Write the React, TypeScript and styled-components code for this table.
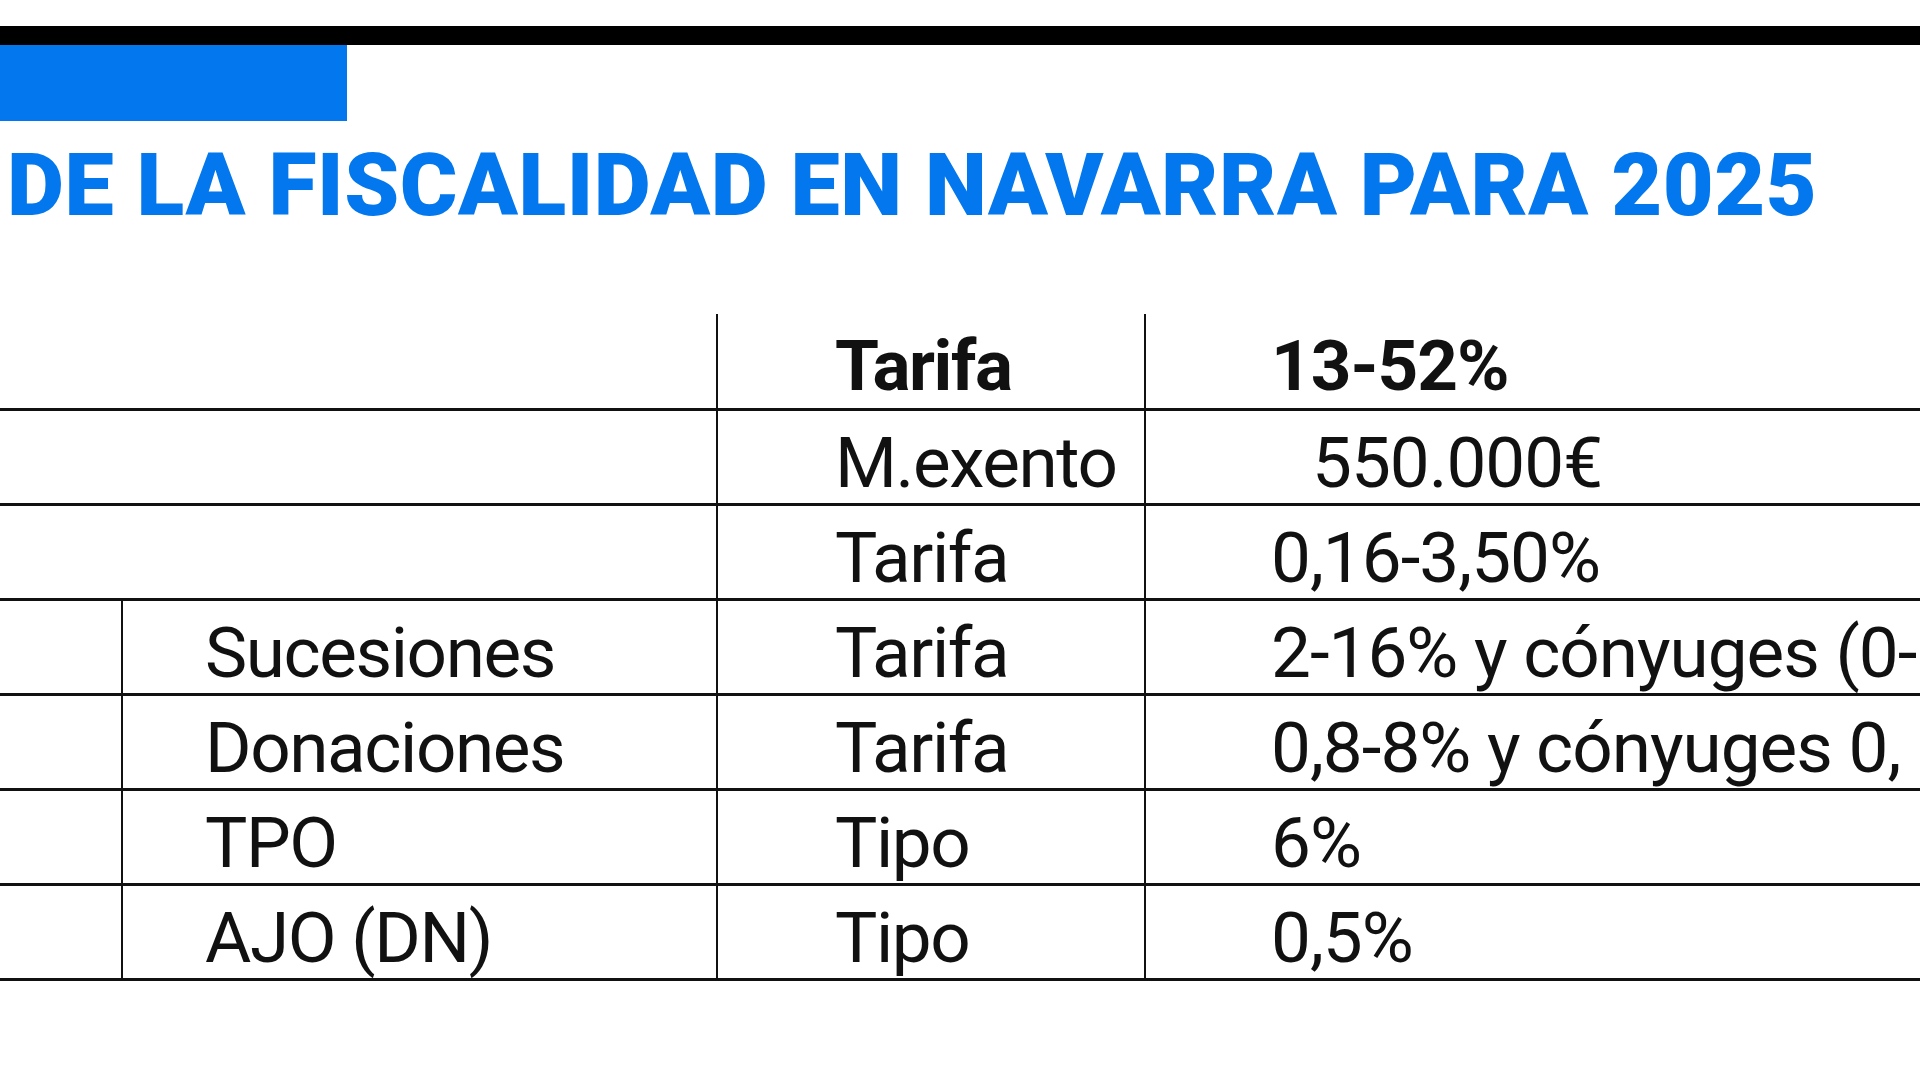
import React from "react";
import styled, { createGlobalStyle } from "styled-components";

const GlobalStyle = createGlobalStyle`
  html, body {
    margin: 0;
    padding: 0;
    background: #ffffff;
    overflow: hidden;
  }
  body {
    font-family: Roboto, "Liberation Sans", Arial, sans-serif;
    color: #111111;
  }
`;

const Page = styled.div`
  width: 1920px;
  height: 1080px;
  overflow: hidden;
  display: flex;
  flex-direction: column;
`;

const TopRule = styled.div`
  margin-top: 26px;
  height: 19px;
  background: #000000;
`;

const Tab = styled.div`
  width: 347px;
  height: 76px;
  background: #0377ee;
`;

const Title = styled.h1`
  margin: 20px 0 0 0;
  padding-left: 7px;
  font-family: Roboto, "Liberation Sans", sans-serif;
  font-weight: 900;
  font-size: 88px;
  line-height: 88px;
  letter-spacing: 0.5px;
  color: #0377ee;
  white-space: nowrap;
`;

const Table = styled.div`
  margin-top: 87px;
  display: flex;
  flex-direction: column;
`;

const Row = styled.div`
  display: grid;
  grid-template-columns: 121px 595px 428px minmax(0, 1fr);
  height: 95px;
  box-sizing: border-box;
  border-bottom: 3px solid #111111;
  &:first-child {
    margin-top: -2px;
    height: 97px;
  }
`;

const Cell = styled.div<{ $span?: number; $line?: boolean; $pad?: number; $bold?: boolean; $tight?: number }>`
  grid-column: span ${(p) => p.$span ?? 1};
  box-sizing: border-box;
  overflow: hidden;
  border-left: ${(p) => (p.$line ? "2px solid #111111" : "none")};
  padding-left: ${(p) => p.$pad ?? 0}px;
  padding-top: 10px;
  font-family: Roboto, "Liberation Sans", sans-serif;
  font-size: 71px;
  line-height: 83px;
  letter-spacing: ${(p) => p.$tight ?? -1.4}px;
  font-weight: ${(p) => (p.$bold ? 700 : 400)};
  white-space: nowrap;
  color: #111111;
`;

const Indent = styled.span<{ $indent?: number }>`
  display: inline-block;
  margin-left: ${(p) => p.$indent ?? 0}px;
`;

type RowData = {
  label?: string;
  kind: string;
  value: string;
  merged?: boolean;
  bold?: boolean;
  indent?: number;
};

const rows: RowData[] = [
  { merged: true, kind: "Tarifa", value: "13-52%", bold: true },
  { merged: true, kind: "M.exento", value: "550.000€", indent: 41 },
  { merged: true, kind: "Tarifa", value: "0,16-3,50%" },
  { label: "Sucesiones", kind: "Tarifa", value: "2-16% y cónyuges (0-" },
  { label: "Donaciones", kind: "Tarifa", value: "0,8-8% y cónyuges 0," },
  { label: "TPO", kind: "Tipo", value: "6%" },
  { label: "AJO (DN)", kind: "Tipo", value: "0,5%" },
];

export default function App() {
  return (
    <>
      <GlobalStyle />
      <Page>
        <TopRule />
        <Tab />
        <Title>DE LA FISCALIDAD EN NAVARRA PARA 2025</Title>
        <Table>
          {rows.map((r, i) => (
            <Row key={i}>
              {r.merged ? (
                <Cell $span={2} />
              ) : (
                <>
                  <Cell />
                  <Cell $line $pad={82}>
                    {r.label}
                  </Cell>
                </>
              )}
              <Cell $line $pad={117} $bold={r.bold}>
                {r.kind}
              </Cell>
              <Cell $line $pad={125} $bold={r.bold} $tight={-1}>
                <Indent $indent={r.indent}>{r.value}</Indent>
              </Cell>
            </Row>
          ))}
        </Table>
      </Page>
    </>
  );
}
